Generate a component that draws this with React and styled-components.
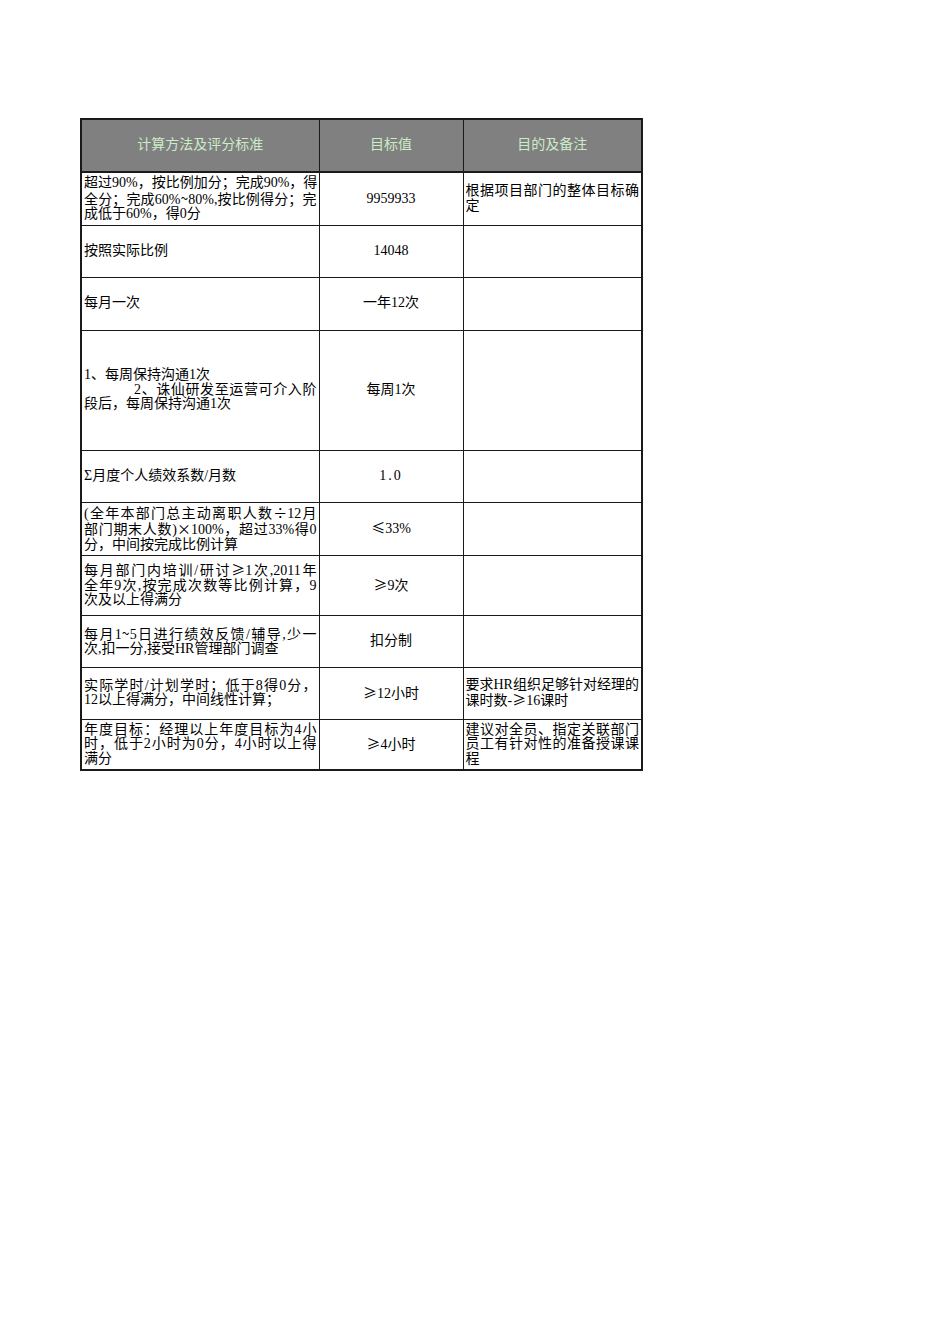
import React from "react";
import styled, { createGlobalStyle } from "styled-components";

const GlobalStyle = createGlobalStyle`
  html, body { margin: 0; padding: 0; background: #fff; }
  body {
    font-family: "Liberation Serif", "Noto Sans CJK SC", serif;
    color: #000;
  }
`;

const Page = styled.div`
  width: 950px;
  min-height: 1344px;
  padding: 118px 0 0 80px;
  box-sizing: border-box;
`;

const Table = styled.table`
  border-collapse: collapse;
  table-layout: fixed;
  width: 561px;
  border: 2px solid #1a1a1a;
  font-size: 14px;
  line-height: 14.5px;
`;

const HeadCell = styled.th`
  background: #808080;
  color: #ccebc8;
  font-weight: normal;
  font-size: 14px;
  text-align: center;
  border: 1px solid #1a1a1a;
  border-bottom: 2px solid #1a1a1a;
  padding: 0;
`;

const Row = styled.tr`
  height: ${(p) => p.$h}px;
`;

const Cell = styled.td`
  border: 1px solid #1a1a1a;
  padding: 0 2px 0 2px;
  vertical-align: middle;
  overflow: hidden;
  text-align: ${(p) => (p.$center ? "center" : "left")};
  letter-spacing: ${(p) => (p.$spaced ? "2px" : "0")};
`;

const Line = styled.div`
  white-space: nowrap;
  padding-left: ${(p) => p.$indent || 0}px;
  text-align: ${(p) => (p.$fill ? "justify" : "left")};
  text-align-last: ${(p) => (p.$fill ? "justify" : "auto")};
`;

const Sym = styled.span`
  font-family: "Noto Sans CJK SC", sans-serif;
`;

function withSymbols(text) {
  return text
    .split(/([≤≥×÷~])/)
    .map((part, i) => (/^[≤≥×÷~]$/.test(part) ? <Sym key={i}>{part}</Sym> : part));
}

function Lines({ lines }) {
  return lines.map((l, i) => {
    const item = typeof l === "string" ? { t: l } : l;
    return (
      <Line key={i} $fill={item.fill} $indent={item.indent}>
        {withSymbols(item.t)}
      </Line>
    );
  });
}

const rows = [
  {
    h: 53,
    method: [
      { t: "超过90%，按比例加分；完成90%，得", fill: true },
      { t: "全分；完成60%~80%,按比例得分；完", fill: true },
      "成低于60%，得0分",
    ],
    target: "9959933",
    note: [{ t: "根据项目部门的整体目标确", fill: true }, "定"],
  },
  { h: 52, method: ["按照实际比例"], target: "14048", note: [] },
  { h: 53, method: ["每月一次"], target: "一年12次", note: [] },
  {
    h: 120,
    method: [
      "1、每周保持沟通1次",
      { t: "2、诛仙研发至运营可介入阶", fill: true, indent: 50 },
      "段后，每周保持沟通1次",
    ],
    target: "每周1次",
    note: [],
  },
  { h: 52, method: ["Σ月度个人绩效系数/月数"], target: "1.0", spaced: true, note: [] },
  {
    h: 53,
    method: [
      { t: "(全年本部门总主动离职人数÷12月", fill: true },
      { t: "部门期末人数)×100%，超过33%得0", fill: true },
      "分，中间按完成比例计算",
    ],
    target: "≤33%",
    note: [],
  },
  {
    h: 60,
    method: [
      { t: "每月部门内培训/研讨≥1次,2011年", fill: true },
      { t: "全年9次,按完成次数等比例计算，9", fill: true },
      "次及以上得满分",
    ],
    target: "≥9次",
    note: [],
  },
  {
    h: 52,
    method: [
      { t: "每月1~5日进行绩效反馈/辅导,少一", fill: true },
      "次,扣一分,接受HR管理部门调查",
    ],
    target: "扣分制",
    note: [],
  },
  {
    h: 52,
    method: [
      { t: "实际学时/计划学时；低于8得0分，", fill: true },
      "12以上得满分，中间线性计算；",
    ],
    target: "≥12小时",
    note: [{ t: "要求HR组织足够针对经理的", fill: true }, "课时数-≥16课时"],
  },
  {
    h: 51,
    method: [
      { t: "年度目标：经理以上年度目标为4小", fill: true },
      { t: "时，低于2小时为0分，4小时以上得", fill: true },
      "满分",
    ],
    target: "≥4小时",
    note: [
      { t: "建议对全员、指定关联部门", fill: true },
      { t: "员工有针对性的准备授课课", fill: true },
      "程",
    ],
  },
];

export default function App() {
  return (
    <Page>
      <GlobalStyle />
      <Table>
        <colgroup>
          <col style={{ width: 238 }} />
          <col style={{ width: 144 }} />
          <col style={{ width: 179 }} />
        </colgroup>
        <thead>
          <Row $h={53}>
            <HeadCell>计算方法及评分标准</HeadCell>
            <HeadCell>目标值</HeadCell>
            <HeadCell>目的及备注</HeadCell>
          </Row>
        </thead>
        <tbody>
          {rows.map((r, i) => (
            <Row key={i} $h={r.h}>
              <Cell>
                <Lines lines={r.method} />
              </Cell>
              <Cell $center $spaced={r.spaced}>
                {withSymbols(r.target)}
              </Cell>
              <Cell>
                <Lines lines={r.note} />
              </Cell>
            </Row>
          ))}
        </tbody>
      </Table>
    </Page>
  );
}
